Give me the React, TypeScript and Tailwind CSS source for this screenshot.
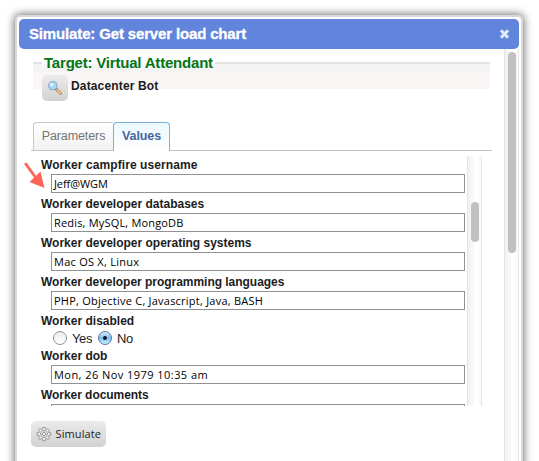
import type { ReactNode } from 'react';

function Field({ label, value, spacing, labelSpacing }: { label: string; value: string; spacing: string; labelSpacing: string }) {
  return (
    <div className="h-[39px]">
      <label className={`block h-[18px] pl-[10px] text-[12px] leading-[18px] font-bold whitespace-nowrap text-[#1c1c1c] ${labelSpacing}`}>{label}</label>
      <div className={`ml-5 h-[19px] w-[414px] border border-[#919191] bg-white pl-[2px] font-['Open_Sans','Noto_Sans',sans-serif] text-[11px] leading-[18px] whitespace-nowrap text-black ${spacing}`}>
        {value}
      </div>
    </div>
  );
}

function Track({ className, thumb }: { className: string; thumb: string }) {
  return (
    <div className={`flex w-[15px] shrink-0 border-x border-l-[#e2e2e2] border-r-[#ece6e7] bg-[linear-gradient(90deg,#f3f3f3_0,#f3f3f3_3px,#faf7f7_3px,#faf7f7_6px,#fff_6px,#fff_11px,#faf8f8_11px)] pl-[3px] ${className}`}>
      <div className={`w-2 rounded-full bg-[#c1c1c1] ${thumb}`} />
    </div>
  );
}

function Magnifier() {
  return (
    <svg width="16" height="16" viewBox="0 0 16 16">
      <path d="M9.2 9.2 13.6 13.4" stroke="#b98a5e" strokeWidth="3" strokeLinecap="round" />
      <path d="M9.7 9.5 13.4 13.1" stroke="#fbc277" strokeWidth="1.7" strokeLinecap="round" />
      <path d="m8.6 9.7 1.2-1.2" stroke="#8694a6" strokeWidth="1.4" />
      <circle cx="5.8" cy="5.7" r="4.1" fill="#a5d6f6" stroke="#82a3c8" strokeWidth="1" />
      <circle cx="4.8" cy="4.5" r="1.8" fill="#dff4ff" />
    </svg>
  );
}

function Gear() {
  return (
    <svg width="16" height="16" viewBox="0 0 16 16" fill="none" stroke="#8c8c8c">
      <path
        d="M6.6 1.5h2.8l.3 2 .7.3 1.6-1.2 1.5 1.6-1.2 1.6.4.8 2 .2v2.4l-2 .4-.3.8 1.1 1.6-1.6 1.6-1.6-1.2-.8.3-.2 2H6.7l-.3-2-.8-.3L4 13.6 2.3 12l1.2-1.6-.3-.8-2-.3V6.8l2-.3.3-.8-1.1-1.6L4 2.5l1.6 1.2.7-.3z"
        fill="#ededed"
        strokeWidth=".9"
      />
      <circle cx="8" cy="8" r="3.6" strokeWidth=".7" />
      <circle cx="8" cy="8" r="1.6" fill="#fff" strokeWidth=".9" />
      <path d="M8 4.4v2M8 9.6v2M4.4 8h2M9.6 8h2" strokeWidth=".6" />
    </svg>
  );
}

function Radio({ on }: { on?: boolean }) {
  return (
    <span
      className={`-mt-px flex size-[14px] items-center justify-center rounded-full border ${
        on ? 'border-[#5677a5] bg-linear-to-b from-[#d8ecfc] via-[#85bdf0] to-[#c8f0ff]' : 'border-[#929292] bg-linear-to-b from-[#ececec] to-white'
      }`}
    >
      {on && <span className="size-1 rounded-full bg-[#08162b]" />}
    </span>
  );
}

function IconButton({ children, className }: { children: ReactNode; className: string }) {
  return <button className={`flex h-[26px] items-center rounded-[5px] bg-linear-to-b from-[#ebebeb] to-[#d2d2d2] ${className}`}>{children}</button>;
}

export default function App() {
  return (
    <div className="h-[461px] w-[539px] overflow-hidden bg-white pt-[15px] pl-[15px] font-['Liberation_Sans',Arial,sans-serif]">
      <div className="h-[480px] w-[508px] rounded-[5px] border-2 border-[#d8d8d8] bg-white p-[2px] shadow-[0_0_8px_1px_rgba(0,0,0,0.55)]">
        <header className="flex h-[30px] w-[500px] items-center justify-between rounded-[5px] bg-[#6184dc] pr-[10px] pl-[10px] text-white">
          <h1 className="text-[15px] leading-[30px] font-bold tracking-[-0.15px] [-webkit-text-stroke:0.3px_white]">Simulate: Get server load chart</h1>
          <svg width="9" height="10" viewBox="0 0 9 10">
            <path d="m2 2.4 5 5.2M7 2.4 2 7.6" stroke="#dceafb" strokeWidth="3" strokeLinecap="square" />
          </svg>
        </header>

        <div className="flex">
          <main className="w-[485px] shrink-0 pl-3">
            <div className="mt-[5px] ml-[2px] h-[68px] w-[457px]">
              <div className="flex h-[18px] items-start bg-[linear-gradient(#fff_8px,#e3e3e3_8px,#e3e3e3_10px,#f4f4f4_10px)]">
                <span className="ml-[9px] h-[10px] w-[173px] bg-white pl-[2px] text-[15px] leading-[18px] font-bold tracking-[-0.2px] whitespace-nowrap text-[#047516]">
                  Target: Virtual Attendant
                </span>
              </div>
              <div className="flex h-[17px] items-start bg-[#faf6f6] pt-[3px] pl-[9px]">
                <IconButton className="w-[26px] shrink-0 justify-center">
                  <Magnifier />
                </IconButton>
                <span className="ml-[3px] text-[12px] leading-[23px] font-bold tracking-[0.15px] whitespace-nowrap text-[#1c1c1c]">Datacenter Bot</span>
              </div>
            </div>

            <nav className="flex h-[29px] w-[461px] border-b border-[#c3c3c3] pl-[2px] text-[12.5px] leading-[26px]">
              <span className="h-7 w-20 rounded-tl-[4px] border border-r-0 border-b-0 border-[#c8c8c8] bg-linear-to-b from-white to-[#f2f2f2] text-center tracking-[-0.1px] text-[#747474]">
                Parameters
              </span>
              <span className="h-[29px] w-[57px] rounded-t-[4px] border border-b-0 border-[#79b1de] bg-linear-to-b from-[#edf9ff] to-white text-center font-bold tracking-[-0.1px] text-[#41679d]">
                Values
              </span>
            </nav>

            <section className="relative mt-[5px] flex h-[250px] w-[451px]">
              <div className="h-full w-[436px] overflow-hidden">
                <Field label="Worker campfire username" value="Jeff@WGM" spacing="tracking-[-0.08px]" labelSpacing="tracking-[0.08px]" />
                <Field label="Worker developer databases" value="Redis, MySQL, MongoDB" spacing="tracking-[0.18px]" labelSpacing="tracking-normal" />
                <Field label="Worker developer operating systems" value="Mac OS X, Linux" spacing="tracking-[0.25px]" labelSpacing="tracking-normal" />
                <Field label="Worker developer programming languages" value="PHP, Objective C, Javascript, Java, BASH" spacing="tracking-[0.23px]" labelSpacing="tracking-[-0.03px]" />
                <div className="h-[35px]">
                  <div className="h-[18px] pl-[10px] text-[12px] leading-[18px] font-bold text-[#1c1c1c]">Worker disabled</div>
                  <div className="flex h-[17px] items-center pl-[22px] text-[13px] text-[#1c1c1c]">
                    <Radio />
                    <span className="ml-[5px] w-[26px] tracking-[-0.4px]">Yes</span>
                    <Radio on />
                    <span className="ml-[5px] tracking-[-0.3px]">No</span>
                  </div>
                </div>
                <Field label="Worker dob" value="Mon, 26 Nov 1979 10:35 am" spacing="tracking-[0.45px]" labelSpacing="tracking-normal" />
                <Field label="Worker documents" value="" spacing="tracking-normal" labelSpacing="tracking-[-0.05px]" />
              </div>
              <Track className="h-full" thumb="mt-[46px] h-10" />
              <svg className="absolute top-[5px] -left-[8px]" width="23" height="28" viewBox="0 0 23 28">
                <path d="M2.2 2.2 13 17" stroke="#fb6656" strokeWidth="2.8" />
                <path d="m17.5 10.5 4 16.5-15-6z" fill="#fb6656" />
              </svg>
            </section>

            <IconButton className="mt-[15px] w-[75px] pl-[5px]">
              <Gear />
              <span className="ml-[3.5px] font-['Open_Sans','Noto_Sans',sans-serif] text-[11px] tracking-[0.1px] text-[#222]">Simulate</span>
            </IconButton>
          </main>
          <Track className="h-[430px]" thumb="mt-[3px] h-[201px]" />
        </div>
      </div>
    </div>
  );
}
